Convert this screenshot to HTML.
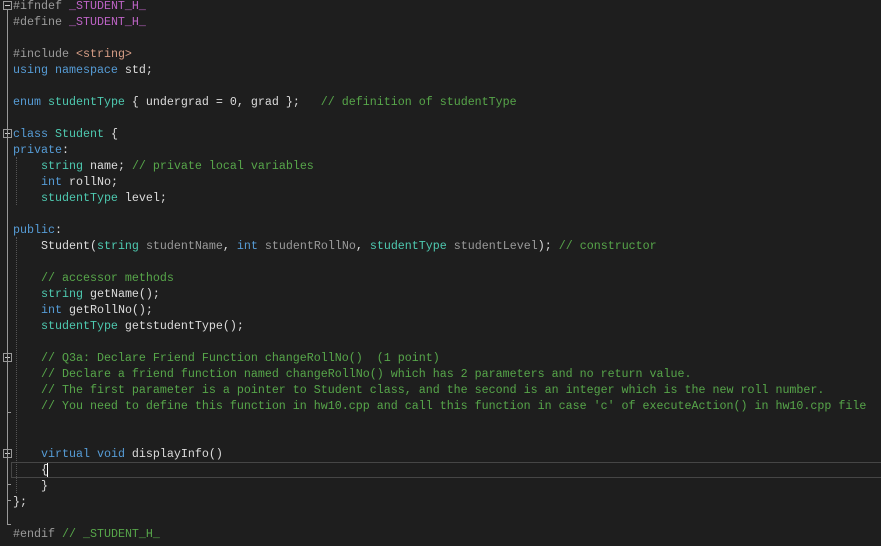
<!DOCTYPE html>
<html><head><style>
body{margin:0;background:#1e1e1e;width:881px;height:546px;overflow:hidden;position:relative;font-family:"Liberation Mono",monospace;font-size:11.67px;}
#code{position:absolute;left:13px;top:-2px;white-space:pre;color:#dcdcdc;line-height:16px;}
.k{color:#569cd6}.t{color:#4ec9b0}.c{color:#57a64a}.p{color:#9b9b9b}.m{color:#bd63c5}.s{color:#d69d85}.g{color:#9a9a9a}
.box{position:absolute;width:7px;height:7px;border:1px solid #999;left:3px;}
.box:after{content:"";position:absolute;left:1px;top:3px;width:5px;height:1px;background:#ccc}
.vl{position:absolute;left:7px;width:1px;background:#999}
.hl{position:absolute;left:7px;width:4px;height:1px;background:#999}
.dl{position:absolute;width:0;border-left:1px dotted #555}
</style></head><body>
<div style="position:absolute;left:11px;top:462px;width:872px;height:14px;border:1px solid #464646"></div>
<div class="box" style="top:1px"></div><div class="vl" style="top:10px;height:6px"></div>
<div class="box" style="top:129px"></div><div class="vl" style="top:138px;height:362px"></div><div class="hl" style="top:500px"></div>
<div class="box" style="top:353px"></div><div class="hl" style="top:412px"></div>
<div class="box" style="top:449px"></div><div class="hl" style="top:484px"></div>
<div class="vl" style="top:16px;height:509px"></div><div class="hl" style="top:524px"></div>
<div class="dl" style="left:16px;top:157px;height:48px"></div>
<div class="dl" style="left:16px;top:237px;height:256px"></div>
<div id="code"><span class="p">#ifndef</span> <span class="m">_STUDENT_H_</span>
<span class="p">#define</span> <span class="m">_STUDENT_H_</span>

<span class="p">#include</span> <span class="s">&lt;string&gt;</span>
<span class="k">using namespace</span> std;

<span class="k">enum</span> <span class="t">studentType</span> { undergrad = 0, grad };   <span class="c">// definition of studentType</span>

<span class="k">class</span> <span class="t">Student</span> {
<span class="k">private</span>:
    <span class="t">string</span> name; <span class="c">// private local variables</span>
    <span class="k">int</span> rollNo;
    <span class="t">studentType</span> level;

<span class="k">public</span>:
    Student(<span class="t">string</span> <span class="g">studentName</span>, <span class="k">int</span> <span class="g">studentRollNo</span>, <span class="t">studentType</span> <span class="g">studentLevel</span>); <span class="c">// constructor</span>

    <span class="c">// accessor methods</span>
    <span class="t">string</span> getName();
    <span class="k">int</span> getRollNo();
    <span class="t">studentType</span> getstudentType();

    <span class="c">// Q3a: Declare Friend Function changeRollNo()  (1 point)</span>
    <span class="c">// Declare a friend function named changeRollNo() which has 2 parameters and no return value.</span>
    <span class="c">// The first parameter is a pointer to Student class, and the second is an integer which is the new roll number.</span>
    <span class="c">// You need to define this function in hw10.cpp and call this function in case 'c' of executeAction() in hw10.cpp file</span>


    <span class="k">virtual</span> <span class="k">void</span> displayInfo()
    {<span style="border-left:1px solid #fff;margin-left:-1px"></span>
    }
};

<span class="p">#endif</span> <span class="c">// _STUDENT_H_</span></div>
</body></html>
